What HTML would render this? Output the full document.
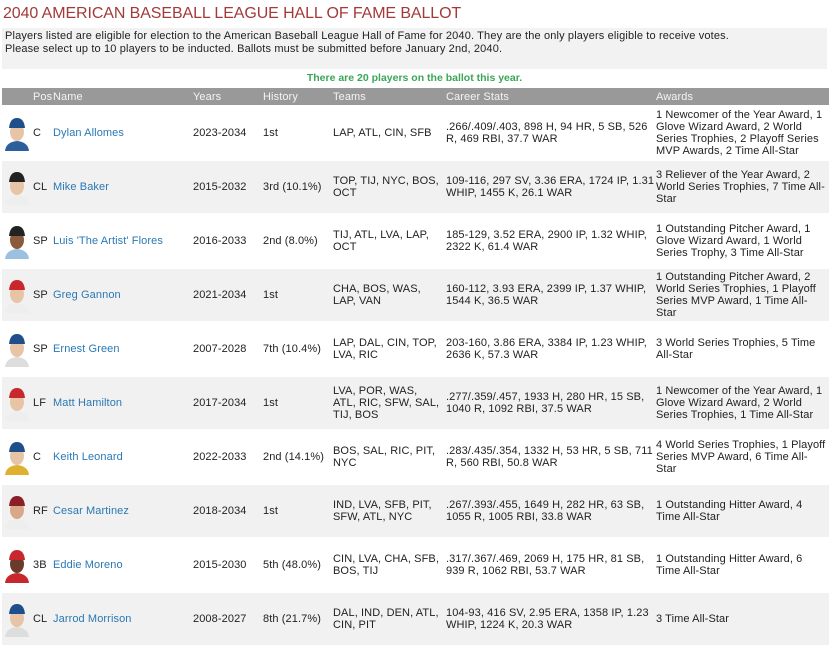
<!DOCTYPE html>
<html><head><meta charset="utf-8"><style>
body{margin:0;background:#fff;font-family:"Liberation Sans",sans-serif;font-size:11px;color:#222;width:829px;height:638px;overflow:hidden;position:relative}
.title{position:absolute;left:3px;top:5px;font-size:16px;color:#a33a3a;letter-spacing:-0.1px}
.intro{position:absolute;left:2px;top:28px;width:825px;height:41px;background:#f2f2f2;line-height:13px;padding:2px 0 0 3px;box-sizing:border-box;letter-spacing:0.15px}
.count{position:absolute;left:0;width:829px;top:72px;text-align:center;color:#3aa657;font-weight:bold;font-size:10.5px}
table{position:absolute;left:2px;top:88px;width:827px;border-collapse:separate;border-spacing:0 2px;table-layout:fixed;margin-top:-2px;letter-spacing:0.1px}
th{background:#999;color:#f4f4f4;font-weight:normal;text-align:left;height:17px;padding:0;font-size:11px}
td{height:52px;padding:0;vertical-align:middle;line-height:12px;white-space:nowrap;overflow:hidden}
tr.g td{background:#f1f1f1}
a{color:#2a78b4;text-decoration:none}
svg{display:block;margin-left:2px}
</style></head><body>
<div class="title">2040 AMERICAN BASEBALL LEAGUE HALL OF FAME BALLOT</div>
<div class="intro">Players listed are eligible for election to the American Baseball League Hall of Fame for 2040. They are the only players eligible to receive votes.<br>Please select up to 10 players to be inducted. Ballots must be submitted before January 2nd, 2040.</div>
<div class="count">There are 20 players on the ballot this year.</div>
<table>
<colgroup><col style="width:31px"><col style="width:20px"><col style="width:140px"><col style="width:70px"><col style="width:70px"><col style="width:113px"><col style="width:210px"><col style="width:173px"></colgroup>
<tr><th></th><th>Pos</th><th>Name</th><th>Years</th><th>History</th><th>Teams</th><th>Career Stats</th><th>Awards</th></tr>
<tr><td><svg width="26" height="36"><path d="M1 36 Q2 27 13 26 Q24 27 25 36Z" fill="#2b5f9e"/><ellipse cx="13" cy="17" rx="7" ry="9" fill="#e8c4a6"/><path d="M5 13 Q6 3 13 3 Q20 3 21 13Z" fill="#1f4f8a"/></svg></td><td>C</td><td><a>Dylan Allomes</a></td><td>2023-2034</td><td>1st</td><td>LAP, ATL, CIN, SFB</td><td>.266/.409/.403, 898 H, 94 HR, 5 SB, 526<br>R, 469 RBI, 37.7 WAR</td><td>1 Newcomer of the Year Award, 1<br>Glove Wizard Award, 2 World<br>Series Trophies, 2 Playoff Series<br>MVP Awards, 2 Time All-Star</td></tr>
<tr class="g"><td><svg width="26" height="36"><path d="M1 36 Q2 27 13 26 Q24 27 25 36Z" fill="#eee"/><ellipse cx="13" cy="17" rx="7" ry="9" fill="#e8c4a6"/><path d="M5 13 Q6 3 13 3 Q20 3 21 13Z" fill="#222"/></svg></td><td>CL</td><td><a>Mike Baker</a></td><td>2015-2032</td><td>3rd (10.1%)</td><td>TOP, TIJ, NYC, BOS,<br>OCT</td><td>109-116, 297 SV, 3.36 ERA, 1724 IP, 1.31<br>WHIP, 1455 K, 26.1 WAR</td><td>3 Reliever of the Year Award, 2<br>World Series Trophies, 7 Time All-<br>Star</td></tr>
<tr><td><svg width="26" height="36"><path d="M1 36 Q2 27 13 26 Q24 27 25 36Z" fill="#9cc0e0"/><ellipse cx="13" cy="17" rx="7" ry="9" fill="#8a5a3a"/><path d="M5 13 Q6 3 13 3 Q20 3 21 13Z" fill="#222"/></svg></td><td>SP</td><td><a>Luis 'The Artist' Flores</a></td><td>2016-2033</td><td>2nd (8.0%)</td><td>TIJ, ATL, LVA, LAP,<br>OCT</td><td>185-129, 3.52 ERA, 2900 IP, 1.32 WHIP,<br>2322 K, 61.4 WAR</td><td>1 Outstanding Pitcher Award, 1<br>Glove Wizard Award, 1 World<br>Series Trophy, 3 Time All-Star</td></tr>
<tr class="g"><td><svg width="26" height="36"><path d="M1 36 Q2 27 13 26 Q24 27 25 36Z" fill="#eee"/><ellipse cx="13" cy="17" rx="7" ry="9" fill="#e8c4a6"/><path d="M5 13 Q6 3 13 3 Q20 3 21 13Z" fill="#c8282d"/></svg></td><td>SP</td><td><a>Greg Gannon</a></td><td>2021-2034</td><td>1st</td><td>CHA, BOS, WAS,<br>LAP, VAN</td><td>160-112, 3.93 ERA, 2399 IP, 1.37 WHIP,<br>1544 K, 36.5 WAR</td><td>1 Outstanding Pitcher Award, 2<br>World Series Trophies, 1 Playoff<br>Series MVP Award, 1 Time All-<br>Star</td></tr>
<tr><td><svg width="26" height="36"><path d="M1 36 Q2 27 13 26 Q24 27 25 36Z" fill="#ddd"/><ellipse cx="13" cy="17" rx="7" ry="9" fill="#e8c4a6"/><path d="M5 13 Q6 3 13 3 Q20 3 21 13Z" fill="#1f4f8a"/></svg></td><td>SP</td><td><a>Ernest Green</a></td><td>2007-2028</td><td>7th (10.4%)</td><td>LAP, DAL, CIN, TOP,<br>LVA, RIC</td><td>203-160, 3.86 ERA, 3384 IP, 1.23 WHIP,<br>2636 K, 57.3 WAR</td><td>3 World Series Trophies, 5 Time<br>All-Star</td></tr>
<tr class="g"><td><svg width="26" height="36"><path d="M1 36 Q2 27 13 26 Q24 27 25 36Z" fill="#eee"/><ellipse cx="13" cy="17" rx="7" ry="9" fill="#e8c4a6"/><path d="M5 13 Q6 3 13 3 Q20 3 21 13Z" fill="#c8282d"/></svg></td><td>LF</td><td><a>Matt Hamilton</a></td><td>2017-2034</td><td>1st</td><td>LVA, POR, WAS,<br>ATL, RIC, SFW, SAL,<br>TIJ, BOS</td><td>.277/.359/.457, 1933 H, 280 HR, 15 SB,<br>1040 R, 1092 RBI, 37.5 WAR</td><td>1 Newcomer of the Year Award, 1<br>Glove Wizard Award, 2 World<br>Series Trophies, 1 Time All-Star</td></tr>
<tr><td><svg width="26" height="36"><path d="M1 36 Q2 27 13 26 Q24 27 25 36Z" fill="#e0b030"/><ellipse cx="13" cy="17" rx="7" ry="9" fill="#e8c4a6"/><path d="M5 13 Q6 3 13 3 Q20 3 21 13Z" fill="#1f4f8a"/></svg></td><td>C</td><td><a>Keith Leonard</a></td><td>2022-2033</td><td>2nd (14.1%)</td><td>BOS, SAL, RIC, PIT,<br>NYC</td><td>.283/.435/.354, 1332 H, 53 HR, 5 SB, 711<br>R, 560 RBI, 50.8 WAR</td><td>4 World Series Trophies, 1 Playoff<br>Series MVP Award, 6 Time All-<br>Star</td></tr>
<tr class="g"><td><svg width="26" height="36"><path d="M1 36 Q2 27 13 26 Q24 27 25 36Z" fill="#eee"/><ellipse cx="13" cy="17" rx="7" ry="9" fill="#d8a888"/><path d="M5 13 Q6 3 13 3 Q20 3 21 13Z" fill="#8a1f2a"/></svg></td><td>RF</td><td><a>Cesar Martinez</a></td><td>2018-2034</td><td>1st</td><td>IND, LVA, SFB, PIT,<br>SFW, ATL, NYC</td><td>.267/.393/.455, 1649 H, 282 HR, 63 SB,<br>1055 R, 1005 RBI, 33.8 WAR</td><td>1 Outstanding Hitter Award, 4<br>Time All-Star</td></tr>
<tr><td><svg width="26" height="36"><path d="M1 36 Q2 27 13 26 Q24 27 25 36Z" fill="#c8282d"/><ellipse cx="13" cy="17" rx="7" ry="9" fill="#6a3a2a"/><path d="M5 13 Q6 3 13 3 Q20 3 21 13Z" fill="#c8282d"/></svg></td><td>3B</td><td><a>Eddie Moreno</a></td><td>2015-2030</td><td>5th (48.0%)</td><td>CIN, LVA, CHA, SFB,<br>BOS, TIJ</td><td>.317/.367/.469, 2069 H, 175 HR, 81 SB,<br>939 R, 1062 RBI, 53.7 WAR</td><td>1 Outstanding Hitter Award, 6<br>Time All-Star</td></tr>
<tr class="g"><td><svg width="26" height="36"><path d="M1 36 Q2 27 13 26 Q24 27 25 36Z" fill="#ddd"/><ellipse cx="13" cy="17" rx="7" ry="9" fill="#e8c4a6"/><path d="M5 13 Q6 3 13 3 Q20 3 21 13Z" fill="#1f4f8a"/></svg></td><td>CL</td><td><a>Jarrod Morrison</a></td><td>2008-2027</td><td>8th (21.7%)</td><td>DAL, IND, DEN, ATL,<br>CIN, PIT</td><td>104-93, 416 SV, 2.95 ERA, 1358 IP, 1.23<br>WHIP, 1224 K, 20.3 WAR</td><td>3 Time All-Star</td></tr>
</table>
</body></html>
